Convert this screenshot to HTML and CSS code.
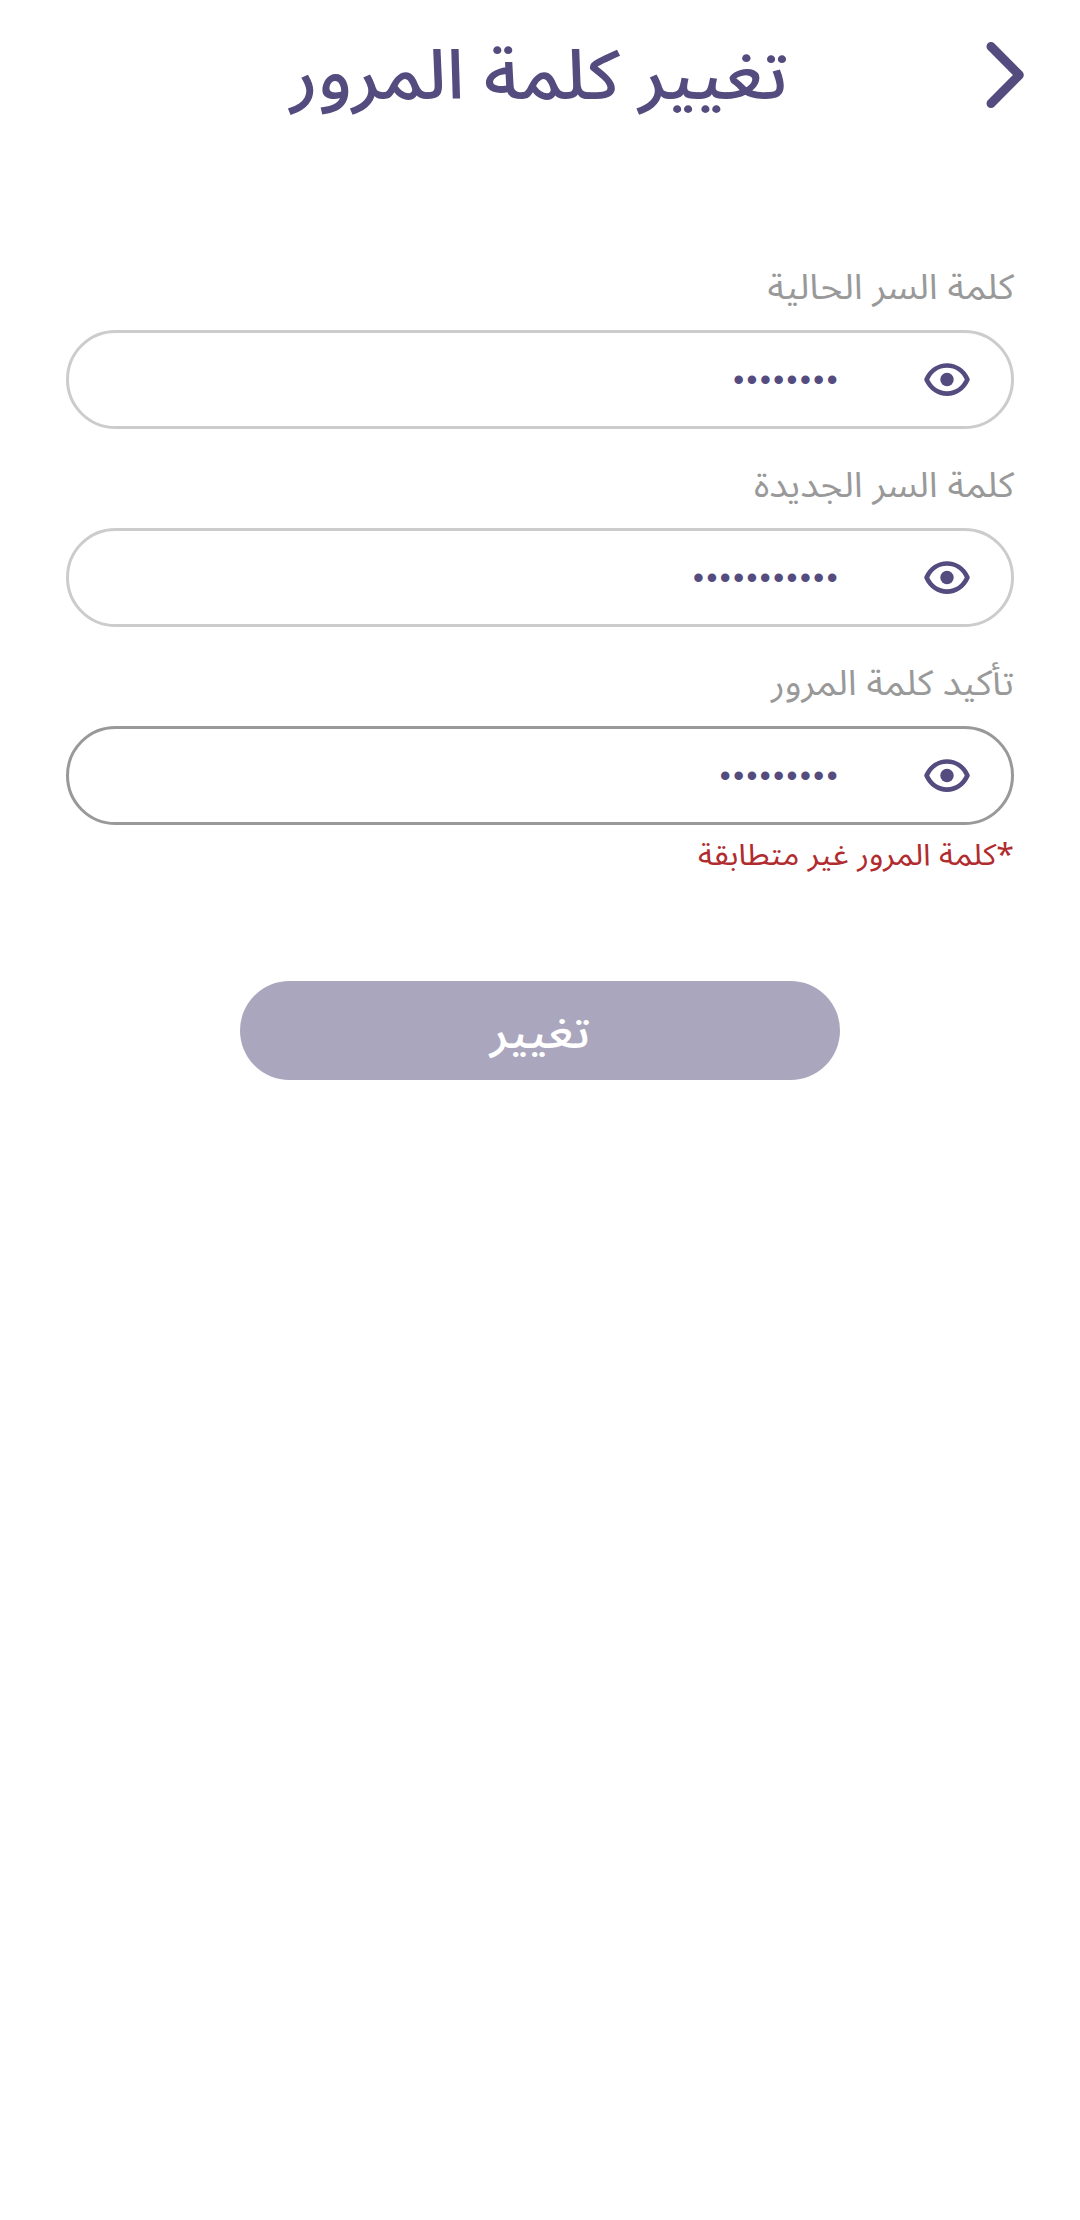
FILE: index.html
```html
<!DOCTYPE html>
<html lang="ar" dir="rtl">
<head>
<meta charset="utf-8">
<title>تغيير كلمة المرور</title>
<link rel="stylesheet" href="styles.css">
</head>
<body>
<header class="header">
  <svg class="back" viewBox="0 0 38 66"><path d="M5 4.5L33.3 33L5 61.5"/></svg>
  <h1 class="title">تغيير كلمة المرور</h1>
</header>
<main class="form">
  <div class="group">
    <label class="label">كلمة السر الحالية</label>
    <div class="field">
      <svg class="eye" viewBox="0 0 46 33"><path class="outline" d="M2.6 16.5C11-2.2 35-2.2 43.4 16.5C35 35.2 11 35.2 2.6 16.5Z"/><circle class="pupil" cx="23" cy="16.5" r="6.7"/></svg>
      <span class="dots">••••••••</span>
    </div>
  </div>
  <div class="group">
    <label class="label">كلمة السر الجديدة</label>
    <div class="field">
      <svg class="eye" viewBox="0 0 46 33"><path class="outline" d="M2.6 16.5C11-2.2 35-2.2 43.4 16.5C35 35.2 11 35.2 2.6 16.5Z"/><circle class="pupil" cx="23" cy="16.5" r="6.7"/></svg>
      <span class="dots">•••••••••••</span>
    </div>
  </div>
  <div class="group">
    <label class="label">تأكيد كلمة المرور</label>
    <div class="field active">
      <svg class="eye" viewBox="0 0 46 33"><path class="outline" d="M2.6 16.5C11-2.2 35-2.2 43.4 16.5C35 35.2 11 35.2 2.6 16.5Z"/><circle class="pupil" cx="23" cy="16.5" r="6.7"/></svg>
      <span class="dots">•••••••••</span>
    </div>
    <p class="error">*كلمة المرور غير متطابقة</p>
  </div>
  <button class="submit"><span class="submit-text">تغيير</span></button>
</main>
</body>
</html>
```
FILE: styles.css
```css
* { box-sizing: border-box; margin: 0; padding: 0; }
body { background: #fff; font-family: "Noto Sans Arabic", "Noto Sans", sans-serif; }
.header { height: 150px; display: grid; grid-template-columns: 126px 1fr 124px; align-items: center; }
.back { width: 38px; height: 66px; margin-right: 56px; fill: none; stroke: #544b7e; stroke-width: 9; stroke-linecap: round; stroke-linejoin: round; }
.title { padding-top: 3px; font-size: 69px; font-weight: 500; line-height: 100px; text-align: center; white-space: nowrap; color: #544b7e; transform: scaleX(1.07); }
.form { padding: 100px 66px 0; display: flex; flex-direction: column; }
.group { height: 198px; }
.label { display: block; height: 80px; line-height: 76px; font-size: 35px; color: #999; transform: scaleX(1.07); transform-origin: right; }
.field { height: 99px; border: 3px solid #ccc; border-radius: 50px; display: flex; align-items: center; padding-right: 41px; }
.active { border-color: #999; }
.eye { width: 46px; height: 33px; }
.outline { fill: none; stroke: #544b7e; stroke-width: 4.7; stroke-linejoin: round; }
.pupil { fill: #544b7e; }
.dots { margin-right: 84px; font-family: "Liberation Sans", sans-serif; font-size: 31px; line-height: 44px; letter-spacing: 2.5px; color: #544b7e; }
.error { font-size: 30px; line-height: 62px; color: #b02c2f; transform: scaleX(1.073); transform-origin: right; }
.submit { align-self: center; width: 600px; height: 99px; margin-top: 137px; border: 0; border-radius: 50px; background: #aaa6bd; color: #fff; font: inherit; font-size: 45px; font-weight: 500; }
.submit-text { display: block; padding-top: 5px; transform: scaleX(1.1); }
```
